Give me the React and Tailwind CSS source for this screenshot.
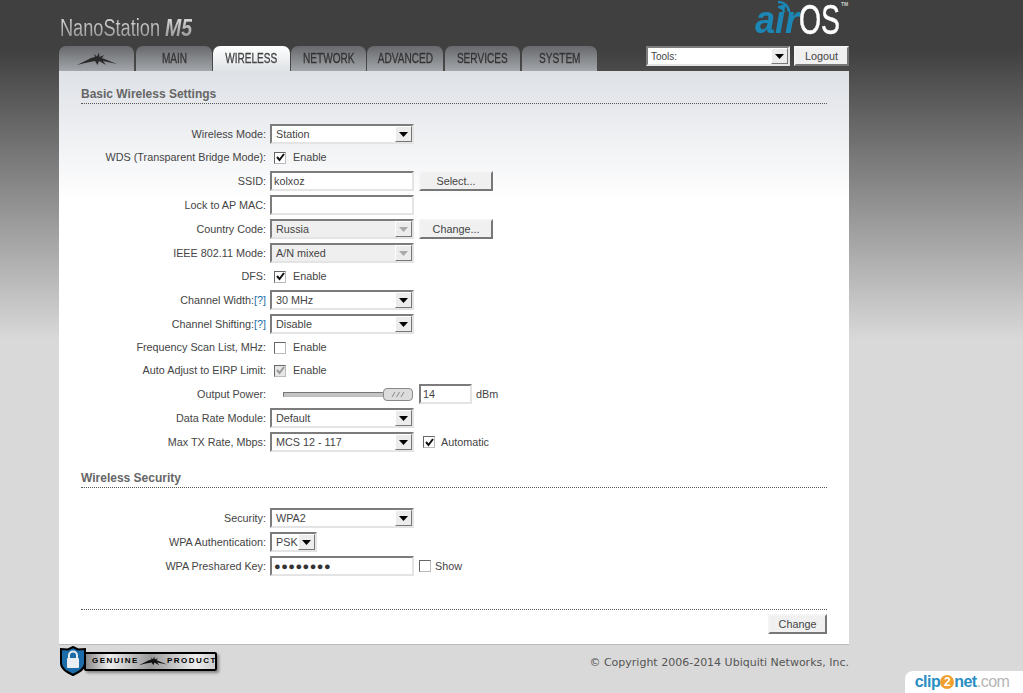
import React from "react";

const Logo = ({ className, fill = "#333" }) => (
  <svg viewBox="0 0 40 14" className={className}>
    <path fill={fill} d="M0 13 L14 6 L18 5 L17 2 L20 4.5 L22 0.5 L22.5 5 L27 3 L25 6 L40 12 L26 9 L29 13 L22 9 L20.5 13 L18 9 L8 11 Z" />
  </svg>
);

const Arrow = ({ disabled }) => (
  <span className="flex w-[17px] h-full items-center justify-center bg-[#ececec] border border-t-white border-l-white border-r-[#777] border-b-[#777]">
    <svg width="9" height="5" viewBox="0 0 9 5">
      <path d="M0 0H9L4.5 5Z" fill={disabled ? "#aaa" : "#000"} />
    </svg>
  </span>
);

const Select = ({ value, w = "w-[144px]", disabled }) => (
  <div className={`${w} h-[20px] flex items-center justify-between border-2 border-t-[#7c7c7c] border-l-[#7c7c7c] border-r-[#e4e4e4] border-b-[#e4e4e4] ${disabled ? "bg-[#efefef]" : "bg-white"}`}>
    <span className="pl-[4px] text-[10.8px] text-[#444] whitespace-nowrap">{value}</span>
    <Arrow disabled={disabled} />
  </div>
);

const Input = ({ value = "", w = "w-[144px]", dots }) => (
  <div className={`${w} h-[20px] flex items-center bg-white border-2 border-t-[#7c7c7c] border-l-[#7c7c7c] border-r-[#e4e4e4] border-b-[#e4e4e4] pl-[2px] text-[10.8px] text-[#444] whitespace-nowrap`}>
    {dots ? <span className="tracking-[0.5px] text-[11px] text-[#333]">●●●●●●●●</span> : value}
  </div>
);

const Button = ({ children, className = "" }) => (
  <button className={`h-[20px] flex items-center justify-center bg-[#f0f0f0] border-2 border-t-[#f4f4f4] border-l-[#f4f4f4] border-r-[#777] border-b-[#777] text-[10.8px] text-[#444] ${className}`}>
    {children}
  </button>
);

const Check = ({ checked, disabled }) => (
  <span className={`w-[12px] h-[12px] flex items-center justify-center border border-t-[#666] border-l-[#666] border-r-[#bbb] border-b-[#bbb] ${disabled ? "bg-[#e6e6e6]" : "bg-white"}`}>
    {checked && (
      <svg width="9" height="9" viewBox="0 0 9 9">
        <path d="M1 4L3.5 7L8 1" fill="none" stroke={disabled ? "#999" : "#111"} strokeWidth="2" />
      </svg>
    )}
  </span>
);

const Enable = ({ checked, disabled, label = "Enable", gap = "gap-[7px]" }) => (
  <div className={`flex items-center ${gap} pl-[4px]`}>
    <Check checked={checked} disabled={disabled} />
    <span className="text-[10.8px] text-[#444]">{label}</span>
  </div>
);

const Row = ({ label, help, h = "h-[24px]", children }) => (
  <div className={`flex items-center ${h}`}>
    <div className="w-[185px] pr-0 text-right text-[10.8px] text-[#444] whitespace-nowrap">
      {label}
      {help && <span className="text-[#1a6fa8]">[?]</span>}
      {!help && ":"}
    </div>
    <div className="ml-[4px] flex items-center">{children}</div>
  </div>
);

const Section = ({ title, className = "" }) => (
  <div className={`border-b border-dotted border-[#555] h-[17px] ${className}`}>
    <div className="text-[12px] font-bold text-[#666] leading-[14px]">{title}</div>
  </div>
);

const tabs = [
  { w: "w-[75px]", logo: true },
  { w: "w-[76px]", label: "MAIN", ml: "ml-[2px]" },
  { w: "w-[77px]", label: "WIRELESS", active: true, ml: "ml-px" },
  { w: "w-[75px]", label: "NETWORK", ml: "ml-px" },
  { w: "w-[76px]", label: "ADVANCED", ml: "ml-px" },
  { w: "w-[75px]", label: "SERVICES", ml: "ml-[2px]" },
  { w: "w-[75px]", label: "SYSTEM", ml: "ml-[2px]" },
];

export default function App() {
  return (
    <div
      className="relative h-[693px] overflow-hidden bg-[linear-gradient(180deg,#404040_0px,#404040_50px,#d9d9d9_340px)]"
      style={{ fontFamily: '"Liberation Sans", Arial, sans-serif' }}
    >
      <div className="w-[790px] ml-[59px]">
        {/* Header */}
        <div className="flex justify-between h-[46px]">
          <div className="flex items-baseline pt-[16px] pl-px h-[46px]">
            <span className="inline-block origin-left scale-x-[0.79] whitespace-nowrap text-[23px] leading-[24px] bg-[linear-gradient(180deg,#e0e0e0,#8f8f8f)] bg-clip-text text-transparent">
              NanoStation
            </span>
            <span className="inline-block origin-left scale-x-[0.85] ml-[-22px] text-[23px] leading-[24px] font-bold italic bg-[linear-gradient(180deg,#e0e0e0,#8f8f8f)] bg-clip-text text-transparent">
              M5
            </span>
          </div>
          <div className="relative w-[100px] h-[46px]">
            <span className="absolute left-[6px] top-[1px] origin-left scale-x-[0.95] text-[38px] leading-[38px] font-bold italic text-[#1c86b4]">air</span>
            <svg className="absolute left-[28px] top-0" width="14" height="13" viewBox="0 0 14 13">
              <path d="M1 2A10.5 10.5 0 0 1 12 12M1 7A5.5 5.5 0 0 1 7 12" fill="none" stroke="#1c86b4" strokeWidth="2.4" />
            </svg>
            <span className="absolute left-[50px] top-[-2px] origin-left scale-x-[0.66] text-[43px] leading-[43px] text-white [-webkit-text-stroke:0.6px_white]">OS</span>
            <span className="absolute left-[92px] top-[1px] text-[5px] leading-[6px] font-bold text-[#ccc]">TM</span>
          </div>
        </div>

        {/* Tabs */}
        <div className="flex h-[25px] items-start relative">
          {tabs.map((t, i) => (
            <div
              key={i}
              className={`${t.w} ${t.ml || ""} h-[25px] rounded-t-[7px] flex items-center justify-center text-[14px] ${
                t.active
                  ? "bg-[linear-gradient(180deg,#ffffff,#dfe2e6)] text-[#444]"
                  : "bg-[linear-gradient(180deg,#67696c,#a3a6aa)] text-[#333]"
              }`}
            >
              {t.logo ? <Logo className="w-[40px] h-[14px]" fill="#2a2a2a" /> : <span className="inline-block scale-x-[0.72] whitespace-nowrap [-webkit-text-stroke:0.3px]">{t.label}</span>}
            </div>
          ))}
          <div className="ml-auto flex gap-[4px] items-start">
            <div className="w-[144px] h-[20px] flex items-center justify-between bg-white border-2 border-t-[#7c7c7c] border-l-[#7c7c7c] border-r-[#e4e4e4] border-b-[#e4e4e4]">
              <span className="pl-[3px] text-[10px] text-[#444]">Tools:</span>
              <Arrow />
            </div>
            <Button className="w-[55px]">Logout</Button>
          </div>
        </div>

        {/* Panel */}
        <div className="h-[574px] bg-[linear-gradient(180deg,#dee1e6_0px,#ffffff_130px)] border-b border-[#bbb] px-[22px] pt-[16px]">
          <Section title="Basic Wireless Settings" />
          <div className="mt-[18px]">
            <Row label="Wireless Mode"><Select value="Station" /></Row>
            <Row label="WDS (Transparent Bridge Mode)" h="h-[23px]"><Enable checked /></Row>
            <Row label="SSID">
              <Input value="kolxoz" />
              <Button className="w-[74px] ml-[5px]">Select...</Button>
            </Row>
            <Row label="Lock to AP MAC"><Input /></Row>
            <Row label="Country Code">
              <Select value="Russia" disabled />
              <Button className="w-[74px] ml-[5px]">Change...</Button>
            </Row>
            <Row label="IEEE 802.11 Mode"><Select value="A/N mixed" disabled /></Row>
            <Row label="DFS" h="h-[23px]"><Enable checked /></Row>
            <Row label="Channel Width:" help><Select value="30 MHz" /></Row>
            <Row label="Channel Shifting:" help><Select value="Disable" /></Row>
            <Row label="Frequency Scan List, MHz" h="h-[23px]"><Enable /></Row>
            <Row label="Auto Adjust to EIRP Limit" h="h-[23px]"><Enable checked disabled /></Row>
            <Row label="Output Power">
              <div className="flex items-center w-[149px] pl-[13px]">
                <div className="w-[100px] h-[5px] bg-[#c4c4c4] border border-t-[#777] border-l-[#777] border-r-[#bbb] border-b-[#bbb]" />
                <div className="w-[30px] h-[13px] rounded-[4px] bg-[#dcdcdc] border border-[#8a8a8a] flex items-center justify-center">
                  <svg width="14" height="7" viewBox="0 0 14 7">
                    <path d="M1 6L4 1M5.5 6L8.5 1M10 6L13 1" stroke="#888" fill="none" />
                  </svg>
                </div>
              </div>
              <Input value="14" w="w-[53px]" />
              <span className="ml-[4px] text-[10.8px] text-[#444]">dBm</span>
            </Row>
            <Row label="Data Rate Module"><Select value="Default" /></Row>
            <Row label="Max TX Rate, Mbps">
              <Select value="MCS 12 - 117" />
              <div className="ml-[5px]"><Enable checked label="Automatic" gap="gap-[6px]" /></div>
            </Row>
          </div>

          <Section title="Wireless Security" className="mt-[17px]" />
          <div className="mt-[18px]">
            <Row label="Security"><Select value="WPA2" /></Row>
            <Row label="WPA Authentication"><Select value="PSK" w="w-[47px]" /></Row>
            <Row label="WPA Preshared Key">
              <Input dots />
              <div className="ml-[1px]"><Enable label="Show" gap="gap-[4px]" /></div>
            </Row>
          </div>

          <div className="mt-[31px] border-b border-dotted border-[#555]" />
          <div className="flex justify-end mt-[4px]">
            <Button className="w-[59px]">Change</Button>
          </div>
        </div>

        {/* Footer */}
        <div className="flex justify-between items-start pt-[1px]">
          <div className="flex items-center h-[30px]">
            <svg width="28" height="30" viewBox="0 0 28 30" className="relative z-10 shrink-0">
              <path d="M14 1L19 3.5L26 3V17C26 23 20 26 14 29C8 26 2 23 2 17V3L9 3.5Z" fill="#1b6ca8" stroke="#000" strokeWidth="2" />
              <rect x="8" y="12" width="12" height="10" rx="1" fill="#e8eef3" />
              <path d="M10 12V9.5A4 4 0 0 1 18 9.5V12" fill="none" stroke="#e8eef3" strokeWidth="2" />
            </svg>
            <div className="ml-[-3px] w-[133px] h-[19px] flex items-center justify-between pl-[6px] pr-[4px] rounded-[2px] border-2 border-black bg-[linear-gradient(90deg,#888,#eee_18%,#999_50%,#eee_85%,#ccc)] shadow-[2px_2px_3px_rgba(0,0,0,0.4)] text-[8px] font-bold tracking-[1.5px] text-black whitespace-nowrap">
              <span>GENUINE</span>
              <Logo className="w-[28px] h-[10px] shrink-0" fill="#111" />
              <span>PRODUCT</span>
            </div>
          </div>
          <div
            className="mt-[10px] text-[11px] leading-[14px] text-[#555]"
            style={{ fontFamily: '"DejaVu Sans", sans-serif' }}
          >
            © Copyright 2006-2014 Ubiquiti Networks, Inc.
          </div>
        </div>
      </div>

      {/* Watermark */}
      <div className="absolute right-0 bottom-0 w-[118px] h-[22px] bg-white rounded-tl-[8px] flex items-center justify-center pr-[4px] text-[16px] tracking-[-0.5px]">
        <span className="font-bold text-[#2a8ec4]">clip</span>
        <span className="w-[14px] h-[14px] rounded-full bg-[#f0a030] text-white text-[12px] font-bold flex items-center justify-center">2</span>
        <span className="font-bold text-[#2a8ec4]">net</span>
        <span className="text-[#b5b5b5]">.com</span>
      </div>
    </div>
  );
}
